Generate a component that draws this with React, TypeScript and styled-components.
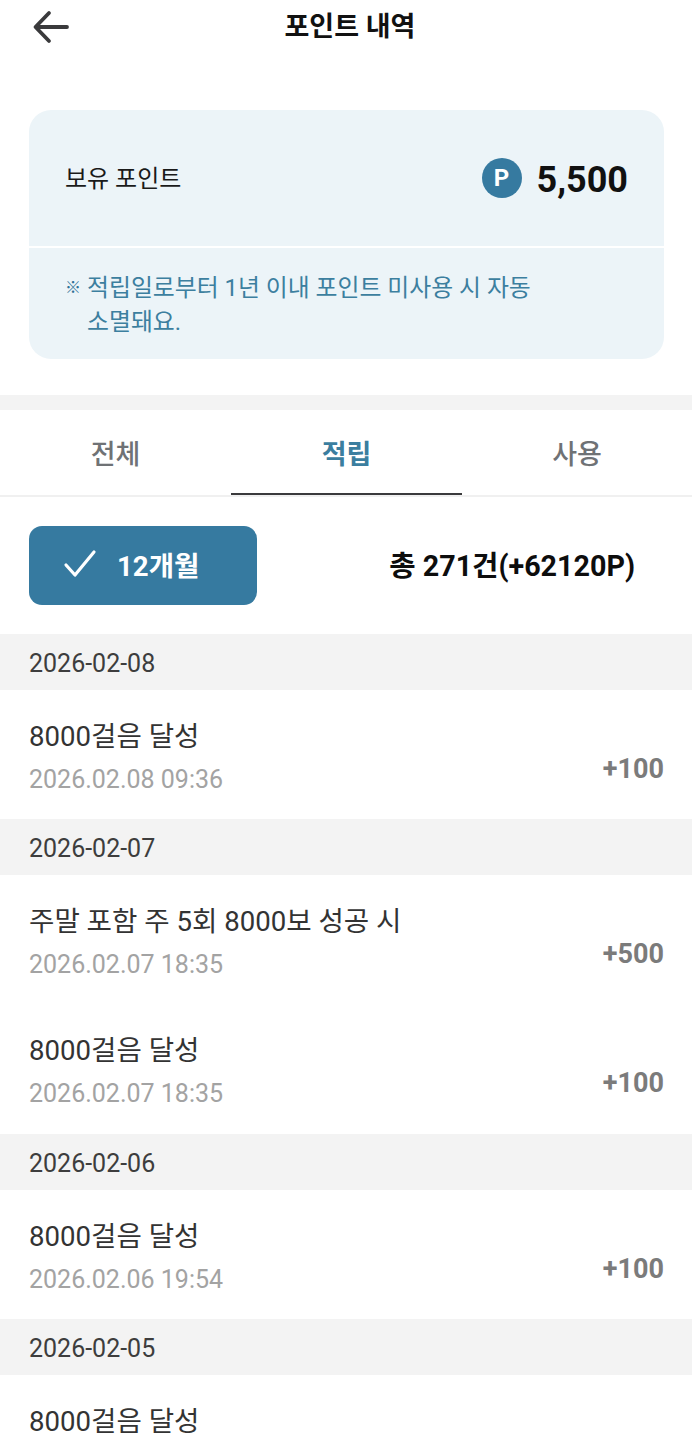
import React from "react";
import styled, { createGlobalStyle } from "styled-components";

const Global = createGlobalStyle`
  html, body { margin: 0; padding: 0; background: #fff; }
  body { font-family: Roboto, "Noto Sans CJK KR", sans-serif; overflow: hidden; }
`;

const Page = styled.div`
  width: 692px;
  height: 1440px;
  overflow: hidden;
  background: #fff;
`;
const Header = styled.header`
  height: 110px;
  display: flex;
  justify-content: center;
  position: relative;
  box-sizing: border-box;
  padding: 9px 0 0 8px;
`;
const BackIcon = styled.svg`
  position: absolute;
  left: 32px;
  top: 7px;
  width: 40px;
  height: 40px;
  fill: none;
  stroke: #3a3a3c;
  stroke-width: 3.8;
  stroke-linecap: round;
  stroke-linejoin: round;
`;
const Title = styled.h1`
  margin: 0;
  font-size: 27px;
  line-height: 36px;
  font-weight: 700;
  color: #111;
`;
const Card = styled.section`
  margin: 0 28px 36px 29px;
  height: 249px;
  border-radius: 22px;
  background: #ecf4f8;
  display: flex;
  flex-direction: column;
`;
const CardTop = styled.div`
  height: 138px;
  box-sizing: border-box;
  padding: 0 36px;
  display: flex;
  align-items: center;
  justify-content: space-between;
  border-bottom: 2px solid #fff;
  flex: none;
`;
const CardLabel = styled.span`
  font-size: 24px;
  color: #1a1a1a;
  position: relative;
  top: -2px;
`;
const Balance = styled.div`
  display: flex;
  align-items: center;
  gap: 15px;
`;
const Coin = styled.span`
  width: 40px;
  height: 40px;
  border-radius: 50%;
  background: #367aa0;
  color: #fff;
  font-size: 24px;
  font-weight: 700;
  display: flex;
  align-items: center;
  justify-content: center;
`;
const Amount = styled.span`
  font-size: 36px;
  line-height: 44px;
  padding-top: 3px;
  font-weight: 700;
  color: #111;
`;
const Note = styled.p`
  margin: 0;
  padding: 23px 100px 0 36px;
  display: flex;
  gap: 6px;
  font-size: 23.85px;
  line-height: 34px;
  color: #3c7f9f;
  word-break: keep-all;
`;
const NoteMark = styled.span`
  font-size: 16px;
  font-weight: 700;
  flex: none;
  color: #2f7397;
`;
const Band = styled.div`
  height: 15px;
  background: #f3f3f3;
`;
const Tabs = styled.nav`
  display: grid;
  grid-template-columns: 231px 231px 230px;
  height: 87px;
  border-bottom: 2px solid #f0f0f0;
  box-sizing: border-box;
`;
const Tab = styled.div<{ $active?: boolean }>`
  display: flex;
  align-items: center;
  justify-content: center;
  padding-top: 1px;
  font-size: 27px;
  font-weight: ${(p) => (p.$active ? 700 : 500)};
  color: ${(p) => (p.$active ? "#3b7e9f" : "#6f7275")};
  border-bottom: 2px solid ${(p) => (p.$active ? "#3a3a3c" : "transparent")};
`;
const FilterRow = styled.div`
  height: 137px;
  box-sizing: border-box;
  padding: 29px 57px 0 29px;
  display: flex;
  justify-content: space-between;
`;
const FilterButton = styled.button`
  width: 228px;
  height: 79px;
  border: 0;
  border-radius: 13px;
  background: #367aa0;
  color: #fff;
  font: 700 27.6px Roboto, "Noto Sans CJK KR", sans-serif;
  display: flex;
  align-items: center;
  padding: 0 0 4px 34px;
  gap: 20px;
`;
const Total = styled.div`
  font-size: 28.7px;
  font-weight: 700;
  color: #0d0d0d;
  line-height: 81px;
`;
const DateHeader = styled.div`
  height: 56px;
  box-sizing: border-box;
  background: #f3f3f3;
  padding-left: 29px;
  font-size: 25px;
  line-height: 59px;
  color: #3d3d3d;
`;
const Item = styled.div<{ $tall?: boolean }>`
  height: ${(p) => (p.$tall ? 130 : 129)}px;
  box-sizing: border-box;
  padding: 27px 28px 0 29px;
  display: flex;
  justify-content: space-between;
`;
const ItemBody = styled.div`
  display: flex;
  flex-direction: column;
  gap: 5px;
`;
const ItemTitle = styled.div`
  font-size: 27.6px;
  line-height: 40px;
  color: #333;
`;
const ItemTime = styled.div`
  font-size: 25px;
  line-height: 36px;
  color: #a3a3a3;
`;
const Points = styled.div`
  font-size: 27px;
  font-weight: 700;
  color: #7b7b7b;
  line-height: 36px;
  padding-top: 34px;
`;

type Entry = { title: string; time: string; points: string };
type Group = { date: string; entries: Entry[] };

const WALK = "8000걸음 달성";
const groups: Group[] = [
  { date: "2026-02-08", entries: [{ title: WALK, time: "2026.02.08 09:36", points: "+100" }] },
  {
    date: "2026-02-07",
    entries: [
      { title: "주말 포함 주 5회 8000보 성공 시", time: "2026.02.07 18:35", points: "+500" },
      { title: WALK, time: "2026.02.07 18:35", points: "+100" },
    ],
  },
  { date: "2026-02-06", entries: [{ title: WALK, time: "2026.02.06 19:54", points: "+100" }] },
  { date: "2026-02-05", entries: [{ title: WALK, time: "", points: "" }] },
];

export default function App() {
  return (
    <Page>
      <Global />
      <Header>
        <BackIcon viewBox="0 0 40 40">
          <path d="M35 20H4M17 6 3.5 20 17 34" />
        </BackIcon>
        <Title>포인트 내역</Title>
      </Header>
      <Card>
        <CardTop>
          <CardLabel>보유 포인트</CardLabel>
          <Balance>
            <Coin>P</Coin>
            <Amount>5,500</Amount>
          </Balance>
        </CardTop>
        <Note>
          <NoteMark>※</NoteMark>
          <span>적립일로부터 1년 이내 포인트 미사용 시 자동 소멸돼요.</span>
        </Note>
      </Card>
      <Band />
      <Tabs>
        <Tab>전체</Tab>
        <Tab $active>적립</Tab>
        <Tab>사용</Tab>
      </Tabs>
      <FilterRow>
        <FilterButton>
          <svg width="34" height="30" viewBox="0 0 34 30" fill="none" stroke="#fff" strokeWidth="3.2" strokeLinecap="round" strokeLinejoin="round">
            <path d="M3 16l9 10L31 3" />
          </svg>
          12개월
        </FilterButton>
        <Total>총 271건(+62120P)</Total>
      </FilterRow>
      {groups.map((g) => (
        <React.Fragment key={g.date}>
          <DateHeader>{g.date}</DateHeader>
          {g.entries.map((e, i) => (
            <Item key={i} $tall={i > 0}>
              <ItemBody>
                <ItemTitle>{e.title}</ItemTitle>
                <ItemTime>{e.time}</ItemTime>
              </ItemBody>
              <Points>{e.points}</Points>
            </Item>
          ))}
        </React.Fragment>
      ))}
    </Page>
  );
}
